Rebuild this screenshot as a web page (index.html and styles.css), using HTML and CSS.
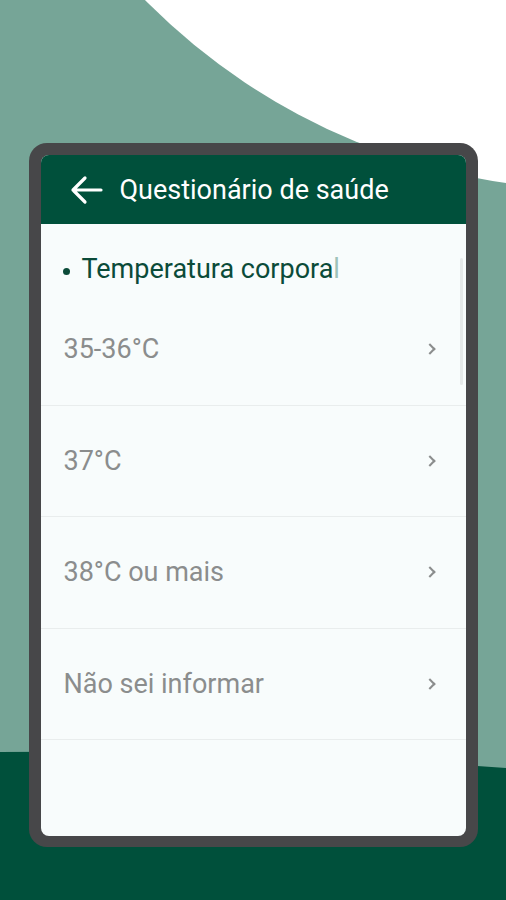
FILE: index.html
```html
<!DOCTYPE html>
<html lang="pt-BR">
<head>
<meta charset="UTF-8">
<meta name="viewport" content="width=device-width, initial-scale=1.0">
<title>Questionário de saúde</title>
<link rel="stylesheet" href="styles.css">
</head>
<body>

<svg class="backdrop" width="506" height="900" viewBox="0 0 506 900">
    <circle cx="600" cy="-450" r="640" fill="#ffffff"/>
    <path d="M0 752 Q 260 750 506 768 L506 900 L0 900 Z" fill="#00503b"/>
</svg>

<div class="device">
    <div class="screen">
        <header class="app-bar">
            <svg class="back" width="34" height="30" viewBox="0 0 34 30">
                <path d="M32 15 H4 M16 3 L4 15 L16 27" fill="none" stroke="#fff" stroke-width="3.2" stroke-linecap="round" stroke-linejoin="round"/>
            </svg>
            <h1>Questionário de saúde</h1>
        </header>

        <main class="content">
            <h2 class="question"><span class="dot"></span>Temperatura corpora<span class="fade">l</span></h2>

            <ul class="options">
                <li>35-36°C <span class="chev"></span></li>
                <li>37°C <span class="chev"></span></li>
                <li>38°C ou mais <span class="chev"></span></li>
                <li>Não sei informar <span class="chev"></span></li>
            </ul>

            <div class="scrollbar"></div>
        </main>
    </div>
</div>

</body>
</html>
```

FILE: styles.css
```css
* {
    margin: 0;
    padding: 0;
    box-sizing: border-box;
    font-family: Roboto, 'Noto Sans', sans-serif;
}
body {
    background: #76a597;
    width: 506px;
    height: 900px;
    position: relative;
    overflow: hidden;
    padding-top: 143px;
}
.backdrop {
    position: absolute;
    left: 0;
    top: 0;
}
.device {
    position: relative;
    width: 449px;
    height: 704px;
    margin: 0 auto;
    background: #474749;
    border-radius: 18px;
    padding: 12px 12px 11px 12px;
}
.screen {
    height: 100%;
    background: #f8fcfc;
    border-radius: 8px;
    overflow: hidden;
    display: flex;
    flex-direction: column;
}
.app-bar {
    height: 69px;
    background: #00503b;
    display: flex;
    align-items: center;
    padding-left: 28px;
    gap: 17px;
    flex-shrink: 0;
}
.app-bar h1 {
    color: #fff;
    font-size: 27px;
    font-weight: 400;
}
.content {
    position: relative;
    flex: 1;
    padding-top: 30px;
}
.question {
    display: flex;
    align-items: center;
    font-size: 27px;
    font-weight: 400;
    line-height: 30px;
    color: #0b4b39;
    padding-left: 22px;
    margin-bottom: 10px;
}
.question .dot {
    width: 7px;
    height: 7px;
    border-radius: 50%;
    background: #0b4b39;
    margin: 4px 12px 0 0;
}
.question .fade {
    color: #9fc2b8;
}
.options {
    list-style: none;
}
.options li {
    height: 111.5px;
    border-bottom: 1px solid #e9eded;
    display: flex;
    align-items: center;
    justify-content: space-between;
    padding: 0 32px 0 23px;
    font-size: 27px;
    color: #8b8d8d;
}
.chev {
    width: 8px;
    height: 8px;
    border-right: 2px solid #8b8d8d;
    border-top: 2px solid #8b8d8d;
    transform: rotate(45deg);
}
.scrollbar {
    position: absolute;
    right: 3px;
    top: 34px;
    width: 3px;
    height: 127px;
    border-radius: 2px;
    background: #e6eaea;
}
```
